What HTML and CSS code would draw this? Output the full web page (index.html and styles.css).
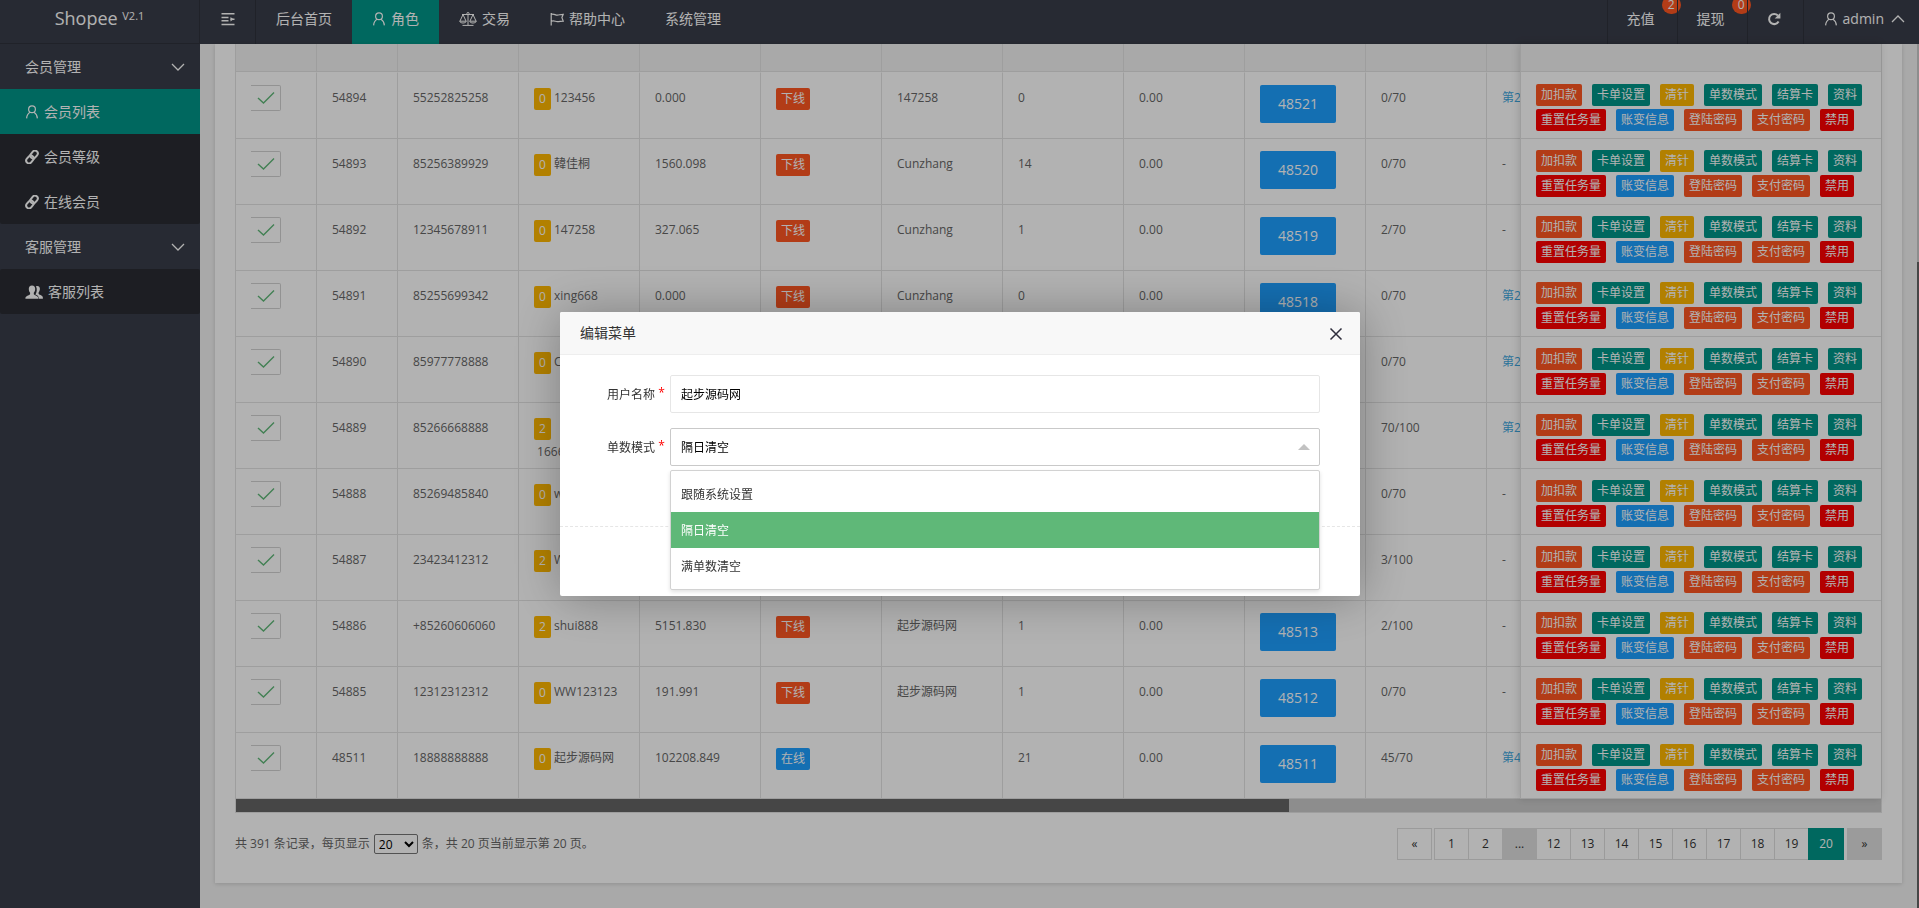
FILE: index.html
```html
<!DOCTYPE html>
<html lang="zh-CN">
  <head>
    <meta charset="UTF-8">
    <meta name="viewport" content="width=device-width,initial-scale=1">
    <title>会员列表</title>
    <link rel="stylesheet" href="styles.css">
  </head>
  <body>
    <svg class="icon-defs" aria-hidden="true">
      <symbol id="icon-user" viewBox="0 0 14 14">
        <circle cx="7" cy="4.2" r="3.4"/>
        <path d="M1.6 13.4C1.8 10.4 3.3 8.2 5 7.2M12.4 13.4C12.2 10.4 10.7 8.2 9 7.2"/>
      </symbol>
      <symbol id="icon-link" viewBox="0 0 14 14">
        <g transform="rotate(-50 7 7)" stroke-width="2">
          <rect x="-0.4" y="4.200" width="8.4" height="5.600" rx="2.800"/>
          <rect x="6" y="4.200" width="8.4" height="5.600" rx="2.800"/>
        </g>
      </symbol>
      <symbol id="icon-group" viewBox="0 0 18 14">
        <path class="fill" d="M11 1.2c2-.9 4 .2 3.9 2.6-.1 1.600-.5 2.800-1.300 3.700v1.300c0 1 4 1.500 4.200 3.300l.1 1.700h-4.200c0-2.400-.7-3.100-3.300-4.200 1.400-2 2-5.700.6-8.400z"/>
        <path class="fill" d="M7 .4c2.200 0 3.300 1.500 3.200 3.600-.1 1.600-.6 2.900-1.400 3.700v1.200c0 1.200 4.200 1.700 4.400 3.700l.1 1.200H.4l.1-1.200c.3-2 4.600-2.500 4.600-3.700V7.700C4.300 6.900 3.900 5.600 3.800 4 3.700 1.900 4.800.4 7 .4z"/>
      </symbol>
      <symbol id="icon-scale" viewBox="0 0 18 14">
        <path stroke-width="1" d="M9 2v11M3.500 13.400h11M3 2.500h12M3.800 3L1 9M4.200 3L7 9M13.800 3L11 9M14.200 3L17 9M.7 9.200h6.600c-.4 2.400-6.200 2.400-6.600 0zM10.700 9.200h6.600c-.4 2.400-6.200 2.400-6.600 0z"/>
        <circle stroke-width="1" cx="9" cy="1.600" r="1.100"/>
      </symbol>
      <symbol id="icon-flag" viewBox="0 0 14 14">
        <path d="M1.200 1v12.500M1.200 2.500c2.500-1.400 4 .8 6 .7s3.500-.9 6-.9l-1.300 3.300 1.300 3.500c-2.500 0-4 .8-6 .6s-3.500-1.700-6-.4"/>
      </symbol>
      <symbol id="icon-menu" viewBox="0 0 14 14">
        <path stroke-width="1.500" d="M.5 1.800h13M.5 5.500h7M.5 8.800h7M9.500 7.200h4M.5 12.500h13"/>
        <path class="fill" d="M9.500 4.900v4.600L12.500 7.200z"/>
      </symbol>
      <symbol id="icon-refresh" viewBox="0 0 14 14">
        <path stroke-width="2" d="M11.600 9.600A5.100 5.100 0 1 1 10.900 3.500"/>
        <path class="fill" d="M13.400.8v5.700H7.700z"/>
      </symbol>
      <symbol id="icon-down" viewBox="0 0 14 14"><path stroke-width="1.300" d="M1 4l6 6 6-6"/></symbol>
      <symbol id="icon-up" viewBox="0 0 14 14"><path stroke-width="1.300" d="M1 10l6-6 6 6"/></symbol>
      <symbol id="icon-close" viewBox="0 0 14 14"><path stroke-width="1.500" d="M1.500 1.500l11 11M12.500 1.500l-11 11"/></symbol>
      <symbol id="icon-ok" viewBox="0 0 18 14"><path stroke-width="1.400" d="M1 7l5.500 5L17 1.500"/></symbol>
    </svg>

    <header class="header">
      <div class="logo">Shopee <sup>V2.1</sup></div>
      <nav class="nav">
        <a class="nav-item nav-menu" href="#" aria-label="折叠菜单"><svg class="icon"><use href="#icon-menu"/></svg></a>
        <a class="nav-item" href="#">后台首页</a>
        <a class="nav-item active" href="#"><svg class="icon"><use href="#icon-user"/></svg>角色</a>
        <a class="nav-item" href="#"><svg class="icon icon-wide"><use href="#icon-scale"/></svg>交易</a>
        <a class="nav-item" href="#"><svg class="icon"><use href="#icon-flag"/></svg>帮助中心</a>
        <a class="nav-item" href="#">系统管理</a>
      </nav>
      <nav class="nav nav-right">
        <a class="nav-item" href="#">充值<span class="badge">2</span></a>
        <a class="nav-item" href="#">提现<span class="badge">0</span></a>
        <a class="nav-item" href="#" aria-label="刷新"><svg class="icon"><use href="#icon-refresh"/></svg></a>
        <a class="nav-item nav-admin" href="#"><svg class="icon"><use href="#icon-user"/></svg>admin<svg class="icon icon-caret"><use href="#icon-up"/></svg></a>
      </nav>
    </header>

    <div class="layout">
      <aside class="side">
        <a class="side-title" href="#">会员管理<svg class="icon"><use href="#icon-down"/></svg></a>
        <div class="side-sub">
          <a class="side-item active" href="#"><svg class="icon"><use href="#icon-user"/></svg>会员列表</a>
          <a class="side-item" href="#"><svg class="icon"><use href="#icon-link"/></svg>会员等级</a>
          <a class="side-item" href="#"><svg class="icon"><use href="#icon-link"/></svg>在线会员</a>
        </div>
        <a class="side-title" href="#">客服管理<svg class="icon"><use href="#icon-down"/></svg></a>
        <div class="side-sub">
          <a class="side-item" href="#"><svg class="icon icon-wide"><use href="#icon-group"/></svg>客服列表</a>
        </div>
      </aside>

      <main class="main">
        <div class="card">
          <div class="table-box">
            <div class="table-row">
              <div class="table-main">
                <table class="table">
                  <colgroup>
                    <col class="col-s"><col class="col-s">
                    <col><col><col><col><col><col><col><col><col><col>
                  </colgroup>
                  <thead><tr><th></th><th></th><th></th><th></th><th></th><th></th><th></th><th></th><th></th><th></th><th></th><th></th></tr></thead>
                  <tbody id="rows"></tbody>
                </table>
              </div>
              <div class="table-fixed">
                <table class="table">
                  <thead><tr><th></th></tr></thead>
                  <tbody id="actions"></tbody>
                </table>
              </div>
            </div>
            <div class="scroll-x"><div class="scroll-thumb"></div></div>
          </div>

          <div class="footer">
            <div class="page-info">
              <label for="limit">共 391 条记录，每页显示</label>
              <select id="limit"><option>10</option><option selected>20</option><option>50</option></select>
              <span>条，共 20 页当前显示第 20 页。</span>
            </div>
            <div class="pager">
              <a class="prev" href="#">«</a>
              <a href="#">1</a><a href="#">2</a><span>...</span><a href="#">12</a><a href="#">13</a><a href="#">14</a><a href="#">15</a><a href="#">16</a><a href="#">17</a><a href="#">18</a><a href="#">19</a>
              <a class="current" href="#">20</a>
              <span class="next">»</span>
            </div>
          </div>
        </div>
      </main>
      <div class="scroll-y"></div>
    </div>

    <div class="shade">
      <form class="modal" role="dialog" aria-labelledby="modal-title">
        <div class="modal-head">
          <span id="modal-title">编辑菜单</span>
          <button class="modal-close" type="button" aria-label="关闭"><svg class="icon"><use href="#icon-close"/></svg></button>
        </div>
        <div class="modal-body">
          <div class="form-item">
            <label for="username">用户名称 <i>*</i></label>
            <input class="control" id="username" type="text" value="起步源码网">
          </div>
          <div class="form-item">
            <label for="mode">单数模式 <i>*</i></label>
            <div class="select-box">
              <select class="control open" id="mode">
                <option>跟随系统设置</option>
                <option selected>隔日清空</option>
                <option>满单数清空</option>
              </select>
              <ul class="options">
                <li>跟随系统设置</li>
                <li class="active">隔日清空</li>
                <li>满单数清空</li>
              </ul>
            </div>
          </div>
        </div>
        <div class="modal-foot"></div>
      </form>
    </div>

    <script src="script.js"></script>
  </body>
</html>
```
FILE: styles.css
```css
* {
  box-sizing: border-box;
}
body {
  margin: 0;
  height: 100vh;
  display: flex;
  flex-direction: column;
  overflow: hidden;
  background: #f2f2f2;
  color: #666;
  font: 12px/24px "Open Sans", "Noto Sans CJK SC", sans-serif;
}
a {
  color: inherit;
  text-decoration: none;
}
.icon-defs {
  position: absolute;
  width: 0;
  height: 0;
}
.icon {
  width: 14px;
  height: 14px;
  flex: none;
  fill: none;
  stroke: currentColor;
  stroke-width: 1.2;
}
.icon-wide {
  width: 18px;
}
.icon .fill, .fill {
  fill: currentColor;
  stroke: none;
}

/* header */
.header {
  display: flex;
  height: 44px;
  flex: none;
  background: #393d49;
  color: #fff;
  font-size: 14px;
}
.logo {
  width: 200px;
  padding-top: 6px;
  text-align: center;
  font-size: 18px;
  line-height: 24px;
  border-right: 1px solid #2e323c;
  border-bottom: 1px solid #2e323c;
}
.logo sup {
  font-size: 11px;
  line-height: 10px;
  vertical-align: 5px;
}
.nav {
  display: flex;
}
.nav-item {
  position: relative;
  display: flex;
  align-items: center;
  gap: 5px;
  padding: 0 20px 6px;
}
.nav-menu {
  padding: 0 20px 6px 21px;
  border-right: 1px solid #2e323c;
}
.nav-item.active, .side-item.active {
  background: #009688;
}
.nav-right {
  margin-left: auto;
}
.nav-right .nav-item {
  padding: 0 22px 6px 19px;
  border-left: 1px solid #2e323c;
}
.nav-right .nav-admin {
  padding: 0 14px 6px 20px;
}
.icon-caret {
  margin-left: 2px;
}
.badge {
  position: absolute;
  top: -4px;
  right: -4px;
  width: 19px;
  height: 18px;
  border-radius: 9px;
  background: #ff5722;
  font-size: 12px;
  line-height: 18px;
  text-align: center;
}

/* sidebar */
.layout {
  position: relative;
  display: flex;
  flex: 1;
}
.side {
  width: 200px;
  flex: none;
  background: #393d49;
  color: #fff;
  font-size: 14px;
}
.side-title, .side-item {
  display: flex;
  align-items: center;
  gap: 5px;
  height: 45px;
  padding: 0 15px 0 25px;
}
.side-title {
  justify-content: space-between;
}
.side-sub {
  background: #2a2c33;
  border-radius: 2px;
}

/* list */
.main {
  flex: 1;
  min-width: 0;
  padding: 0 17px 0 15px;
}
.card {
  padding: 0 20px 23px;
  background: #fff;
  box-shadow: 0 1px 4px rgba(0, 0, 0, .15);
}
.table-box {
  border: 1px solid #e3e3e3;
  border-top: 0;
}
.table-row {
  display: flex;
}
.table-main {
  flex: 1;
  min-width: 0;
  overflow: hidden;
}
.table-fixed {
  position: relative;
  width: 361px;
  flex: none;
  border-left: 1px solid #e3e3e3;
  background: #fff;
  box-shadow: -1px 0 8px rgba(0, 0, 0, .15);
}
.table {
  width: 1372px;
  table-layout: fixed;
  border-collapse: separate;
  border-spacing: 0;
}
.table col {
  width: 121px;
}
.table .col-s {
  width: 81px;
}
.table-fixed .table {
  width: 100%;
}
.table th {
  height: 28px;
  padding: 0;
  background: #f2f2f2;
  border-right: 1px solid #e3e3e3;
  border-bottom: 1px solid #e3e3e3;
}
.table td {
  height: 66px;
  padding: 13px 15px 0;
  vertical-align: top;
  border-right: 1px solid #e3e3e3;
  border-bottom: 1px solid #e3e3e3;
}
.table tbody tr:first-child td {
  height: 67px;
  border-top: 1px solid #fff;
}
.table-fixed .table th, .table-fixed .table td {
  border-right: 0;
}
.table .cell-check, .table .cell-btn {
  padding-top: 12px;
}
.table .cell-actions {
  padding: 11px 15px 0;
}
.table .cell-link {
  color: #3ea6dd;
}
.check {
  display: flex;
  width: 30px;
  height: 26px;
  align-items: center;
  justify-content: center;
  border: 1px solid #d2d2d2;
  border-left: 0;
  border-radius: 0 2px 2px 0;
  color: #5fb878;
}
.check input {
  position: absolute;
  opacity: 0;
}
.btn {
  height: 38px;
  padding: 0 18px;
  border: 0;
  border-radius: 2px;
  background: #1e9fff;
  color: #fff;
  font: inherit;
  font-size: 14px;
  line-height: 38px;
}
.btn-xs {
  display: inline-block;
  height: 22px;
  padding: 0 5px;
  vertical-align: middle;
  font-size: 12px;
  line-height: 22px;
}
.actions {
  display: flex;
  flex-wrap: wrap;
  gap: 3px 10px;
}
.orange { background: #ff5722; }
.green { background: #009688; }
.yellow { background: #ffb800; }
.blue { background: #1e9fff; }
.red { background: #f00; }
.scroll-x {
  height: 13px;
  background: #cbcbcb;
}
.scroll-thumb {
  width: 64%;
  height: 13px;
  background: #656565;
}
.scroll-y {
  position: absolute;
  top: 0;
  right: 0;
  bottom: 0;
  width: 2px;
  background: linear-gradient(#cbcbcb 218px, #656565 218px);
}

/* paging */
.footer {
  display: flex;
  justify-content: space-between;
  padding-top: 15px;
}
.page-info {
  display: flex;
  align-items: center;
  gap: 4px;
}
.page-info select {
  width: 44px;
  height: 20px;
  padding: 0;
  border: 1px solid #767676;
  border-radius: 2px;
  background: #fff;
  color: #000;
  font: inherit;
  line-height: 18px;
}
.pager {
  display: flex;
  color: #333;
}
.pager a, .pager span {
  width: 35px;
  height: 32px;
  margin-right: -1px;
  border: 1px solid #dedede;
  line-height: 30px;
  text-align: center;
}
.pager span {
  background: #dedede;
}
.pager .prev {
  margin-right: 2px;
}
.pager .current {
  position: relative;
  width: 36px;
  margin-right: 3px;
  border-color: #009688;
  background: #009688;
  color: #fff;
}
.pager .next {
  margin-right: 0;
}

/* dialog */
.shade {
  position: fixed;
  inset: 0;
  display: flex;
  align-items: center;
  justify-content: center;
  padding-left: 1px;
  background: rgba(0, 0, 0, .3);
}
.modal {
  width: 800px;
  border-radius: 2px;
  background: #fff;
  box-shadow: 1px 1px 50px rgba(0, 0, 0, .3);
  color: #333;
}
.modal-head {
  display: flex;
  align-items: center;
  justify-content: space-between;
  height: 43px;
  padding: 0 16px 0 20px;
  border-bottom: 1px solid #eee;
  border-radius: 2px 2px 0 0;
  background: #f8f8f8;
  font-size: 14px;
}
.modal-close {
  display: flex;
  padding: 2px 1px 0;
  border: 0;
  background: none;
  color: #2e2d3c;
}
.modal-body {
  display: grid;
  gap: 15px;
  padding: 20px 40px 60px;
}
.form-item {
  display: flex;
  align-items: center;
}
.form-item label {
  width: 70px;
  padding-left: 7px;
}
.form-item label i {
  color: #f00;
  font-style: normal;
  vertical-align: 2px;
}
.control {
  display: block;
  flex: 1;
  width: 100%;
  height: 38px;
  padding: 0 10px;
  border: 1px solid #e6e6e6;
  border-radius: 2px;
  background: #fff;
  color: #000;
  font: inherit;
}
.select-box {
  position: relative;
  flex: 1;
}
.select-box::after {
  content: "";
  position: absolute;
  top: 16px;
  right: 10px;
  border: 6px solid transparent;
  border-top: 0;
  border-bottom-color: #c2c2c2;
}
.control.open {
  appearance: none;
  padding-top: 2px;
  border-color: #c9c9c9;
}
.options {
  position: absolute;
  top: 42px;
  left: 0;
  right: 0;
  margin: 0;
  padding: 5px 0;
  border: 1px solid #d2d2d2;
  border-radius: 2px;
  background: #fff;
  box-shadow: 0 2px 4px rgba(0, 0, 0, .12);
  list-style: none;
}
.options li {
  height: 36px;
  padding: 1px 10px 0;
  line-height: 36px;
}
.options .active {
  background: #5fb878;
  color: #fff;
}
.modal-foot {
  height: 70px;
  border-top: 1px dashed #e6e6e6;
}
```
FILE: script.js
```js
// id, phone, level, name, balance, online, parent, count, amount, code, progress, order
let list = [
  ['54894', '55252825258', 0, '123456', '0.000', 0, '147258', '0', '0.00', '48521', '0/70', '第2'],
  ['54893', '85256389929', 0, '韓佳桐', '1560.098', 0, 'Cunzhang', '14', '0.00', '48520', '0/70', '-'],
  ['54892', '12345678911', 0, '147258', '327.065', 0, 'Cunzhang', '1', '0.00', '48519', '2/70', '-'],
  ['54891', '85255699342', 0, 'xing668', '0.000', 0, 'Cunzhang', '0', '0.00', '48518', '0/70', '第2'],
  ['54890', '85977778888', 0, 'C', '', 0, '', '', '', '', '0/70', '第2'],
  ['54889', '85266668888', 2, '<br>&nbsp;1666', '', 0, '', '', '', '', '70/100', '第2'],
  ['54888', '85269485840', 0, 'w', '', 0, '', '', '', '', '0/70', '-'],
  ['54887', '23423412312', 2, 'W', '', 0, '', '', '', '', '3/100', '-'],
  ['54886', '+85260606060', 2, 'shui888', '5151.830', 0, '起步源码网', '1', '0.00', '48513', '2/100', '-'],
  ['54885', '12312312312', 0, 'WW123123', '191.991', 0, '起步源码网', '1', '0.00', '48512', '0/70', '-'],
  ['48511', '18888888888', 0, '起步源码网', '102208.849', 1, '', '21', '0.00', '48511', '45/70', '第4']
];

let buttons = [
  ['加扣款', 'orange'], ['卡单设置', 'green'], ['清针', 'yellow'], ['单数模式', 'green'],
  ['结算卡', 'green'], ['资料', 'green'], ['重置任务量', 'red'], ['账变信息', 'blue'],
  ['登陆密码', 'orange'], ['支付密码', 'orange'], ['禁用', 'red']
];

let rows = '';
let actions = '';
list.forEach((r) => {
  let link = r[11] == '-' ? '<td>-</td>' : '<td class="cell-link">' + r[11] + '</td>';
  rows += '<tr>' +
    '<td class="cell-check"><label class="check"><input type="checkbox" checked aria-label="' + r[0] + '"><svg class="icon icon-wide"><use href="#icon-ok"/></svg></label></td>' +
    '<td>' + r[0] + '</td>' +
    '<td>' + r[1] + '</td>' +
    '<td><span class="btn btn-xs yellow">' + r[2] + '</span> ' + r[3] + '</td>' +
    '<td>' + r[4] + '</td>' +
    '<td><button class="btn btn-xs ' + (r[5] ? 'blue">在线' : 'orange">下线') + '</button></td>' +
    '<td>' + r[6] + '</td>' +
    '<td>' + r[7] + '</td>' +
    '<td>' + r[8] + '</td>' +
    '<td class="cell-btn">' + (r[9] ? '<button class="btn">' + r[9] + '</button>' : '') + '</td>' +
    '<td>' + r[10] + '</td>' + link + '</tr>';
  actions += '<tr><td class="cell-actions"><div class="actions">' +
    buttons.map((b) => '<button class="btn btn-xs ' + b[1] + '">' + b[0] + '</button>').join('') +
    '</div></td></tr>';
});
document.getElementById('rows').innerHTML = rows;
document.getElementById('actions').innerHTML = actions;
```
